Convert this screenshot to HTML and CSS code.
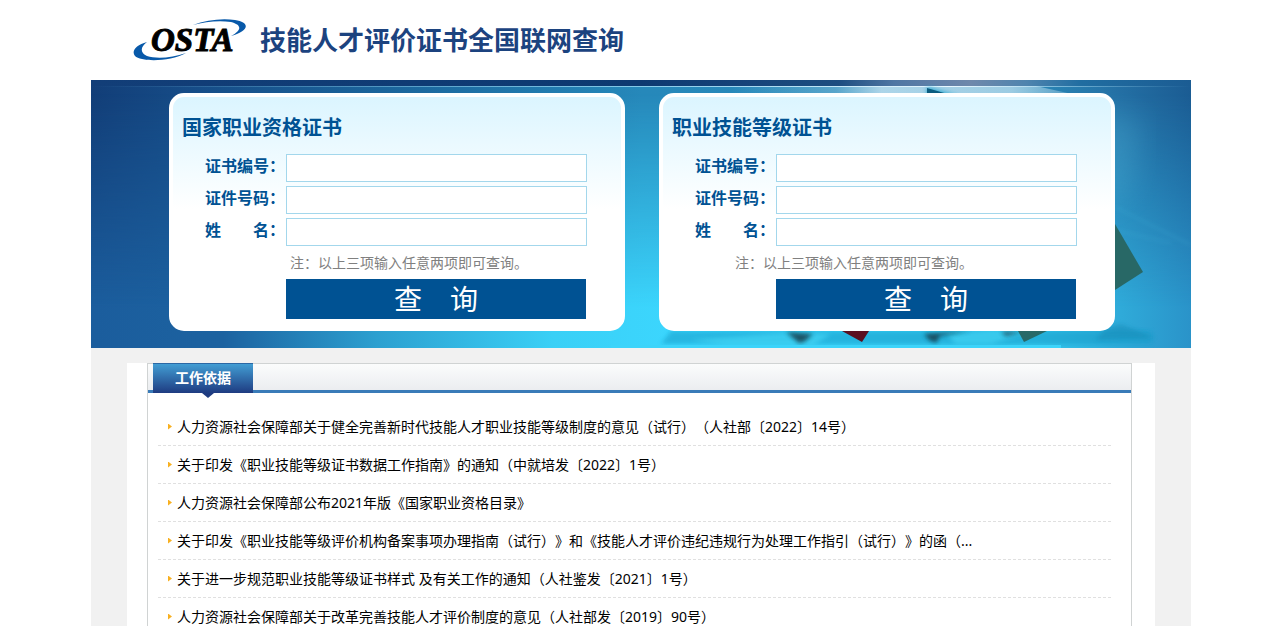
FILE: index.html
```html
<!DOCTYPE html>
<html lang="zh-CN">
<head>
<meta charset="utf-8">
<meta name="viewport" content="width=device-width, initial-scale=1">
<title>技能人才评价证书全国联网查询</title>
<link rel="stylesheet" href="styles.css">
</head>
<body>
<div class="page">
  <header class="header">
    <svg class="logo" viewBox="0 0 116 44" role="img" aria-label="OSTA">
      <path class="swoosh" d="M61 7 C74 2 90 0 103 2 C118 4 118 13 99 18 C110 12 110 7 99 4 C86 2 73 4 61 7Z"/>
      <path class="swoosh" d="M15 24 C4 27 -1 33 3 38 C9 44 38 44 54 35 C40 40 24 41 15 38 C8 35 8 29 15 24Z"/>
      <text class="logo-text" x="19" y="33">OSTA</text>
    </svg>
    <h1 class="site-title">技能人才评价证书全国联网查询</h1>
  </header>

  <section class="banner">
    <svg class="banner-art" viewBox="0 0 1100 268" preserveAspectRatio="none" aria-hidden="true">
      <defs>
        <linearGradient id="base" x1="0" y1="0" x2="1" y2="0">
          <stop offset="0" stop-color="#123e78"/><stop offset=".09" stop-color="#164c87"/>
          <stop offset=".3" stop-color="#1c699f"/><stop offset=".5" stop-color="#2688ba"/>
          <stop offset=".85" stop-color="#2a89b8"/><stop offset=".92" stop-color="#2674a8"/><stop offset="1" stop-color="#1b5c93"/>
        </linearGradient>
        <linearGradient id="low" x1="0" y1="0" x2="1" y2="0">
          <stop offset="0" stop-color="#1b5d9d"/><stop offset=".12" stop-color="#1c62a0"/>
          <stop offset=".26" stop-color="#2ca0d0"/><stop offset=".42" stop-color="#3ad0f6"/>
          <stop offset=".55" stop-color="#3cd7ff"/><stop offset=".86" stop-color="#35c6ec"/><stop offset="1" stop-color="#2a93c9"/>
        </linearGradient>
        <linearGradient id="fade" x1="0" y1="0" x2="0" y2="1">
          <stop offset=".05" stop-color="#fff" stop-opacity="0"/><stop offset=".85" stop-color="#fff"/>
        </linearGradient>
        <mask id="down"><rect width="1100" height="268" fill="url(#fade)"/></mask>
        <linearGradient id="strip" x1="0" y1="0" x2="1" y2="0">
          <stop offset="0" stop-color="#123e78"/><stop offset=".5" stop-color="#0d3971"/><stop offset=".68" stop-color="#1d4d80"/>
          <stop offset=".73" stop-color="#4f76a3"/><stop offset=".8" stop-color="#6f88ab"/><stop offset=".85" stop-color="#4f84ae"/><stop offset=".9" stop-color="#206da1"/><stop offset="1" stop-color="#1b5c93"/>
        </linearGradient>
        <linearGradient id="line" x1="0" y1="0" x2="1" y2="0">
          <stop offset="0" stop-color="#8fd0ed" stop-opacity="0"/><stop offset=".5" stop-color="#8fd0ed" stop-opacity=".9"/>
          <stop offset=".78" stop-color="#e8f7ff"/><stop offset="1" stop-color="#8fd0ed" stop-opacity="0"/>
        </linearGradient>
        <linearGradient id="glare" x1="0" y1="0" x2="1" y2="0">
          <stop offset="0" stop-color="#cde8f5" stop-opacity="0"/><stop offset=".3" stop-color="#cde8f5" stop-opacity=".3"/><stop offset=".43" stop-color="#cde8f5" stop-opacity=".8"/>
          <stop offset=".8" stop-color="#cde8f5" stop-opacity=".7"/><stop offset="1" stop-color="#cde8f5" stop-opacity=".2"/>
        </linearGradient>
        <filter id="soft" x="-30%" y="-30%" width="160%" height="160%"><feGaussianBlur stdDeviation="2"/></filter>
        <filter id="softer" x="-30%" y="-30%" width="160%" height="160%"><feGaussianBlur stdDeviation="14"/></filter>
      </defs>
      <rect width="1100" height="268" fill="url(#base)"/>
      <rect width="1100" height="268" fill="url(#low)" mask="url(#down)"/>
      <path d="M1000 30 L1050 40 L1040 110 L1000 130Z" fill="#58b5d6" opacity=".25" filter="url(#softer)"/>
      <path d="M640 6 H945 L990 16 H640Z" fill="url(#glare)"/>
      <rect width="1100" height="6" fill="url(#strip)"/>
      <rect y="6" width="1100" height="1" fill="url(#line)"/>
      <path d="M836 7 L868 16 H836Z" fill="#2aa8d0" filter="url(#soft)"/>
      <path d="M836 8 L860 15 H836Z" fill="#0b5c80"/>
      <path d="M1024 127 L1100 165 M1024 150 L1080 163" stroke="#4fbddf" stroke-width="2" opacity=".2" filter="url(#soft)"/>
      <path d="M580 251 H1060 V264 H570Z" fill="#159dc9" opacity=".55" filter="url(#soft)"/>
      <path d="M700 252 L740 254 L722 266 H636 L600 260Z M855 254 L900 250 L940 252 L900 264 H865Z" fill="#42d4f4" opacity=".7" filter="url(#soft)"/>
      <path d="M695 252 L722 254 L713 262 L708 263Z M833 254 L880 251 L849 256 L845 263 L838 260Z M910 252 H932 L915 256Z" fill="#123f50" opacity=".85" filter="url(#soft)"/>
      <path d="M1015 248 L1030 244 L1064 258 L1005 260Z" fill="#1689b5" opacity=".5" filter="url(#soft)"/>
      <path d="M751 251 H778 L771 262Z" fill="#5b1020"/>
      <path d="M927 251 H956 L933 262Z" fill="#286967"/>
      <path d="M1024 144 L1052 192 L1024 210Z" fill="#286866"/>
      <rect y="265" x="520" width="450" height="3" fill="#3cd4fa"/>
    </svg>

    <form class="card" onsubmit="return false">
      <h2 class="card-title">国家职业资格证书</h2>
      <div class="field"><label class="label" for="q-cert">证书编号：</label><input class="input" id="q-cert" type="text"></div>
      <div class="field"><label class="label" for="q-id">证件号码：</label><input class="input" id="q-id" type="text"></div>
      <div class="field"><label class="label" for="q-name">姓　　名：</label><input class="input" id="q-name" type="text"></div>
      <p class="note">注：以上三项输入任意两项即可查询。</p>
      <button class="submit" type="submit">查　询</button>
    </form>

    <form class="card" onsubmit="return false">
      <h2 class="card-title">职业技能等级证书</h2>
      <div class="field"><label class="label" for="s-cert">证书编号：</label><input class="input" id="s-cert" type="text"></div>
      <div class="field"><label class="label" for="s-id">证件号码：</label><input class="input" id="s-id" type="text"></div>
      <div class="field"><label class="label" for="s-name">姓　　名：</label><input class="input" id="s-name" type="text"></div>
      <p class="note note-wide">注：以上三项输入任意两项即可查询。</p>
      <button class="submit" type="submit">查　询</button>
    </form>
  </section>

  <main class="content">
    <div class="sheet">
      <section class="panel">
        <div class="panel-head"><h2 class="tab">工作依据</h2></div>
        <ul class="list">
          <li class="item"><a class="link" href="#">人力资源社会保障部关于健全完善新时代技能人才职业技能等级制度的意见（试行）（人社部〔2022〕14号）</a></li>
          <li class="item"><a class="link" href="#">关于印发《职业技能等级证书数据工作指南》的通知（中就培发〔2022〕1号）</a></li>
          <li class="item"><a class="link" href="#">人力资源社会保障部公布2021年版《国家职业资格目录》</a></li>
          <li class="item"><a class="link" href="#">关于印发《职业技能等级评价机构备案事项办理指南（试行）》和《技能人才评价违纪违规行为处理工作指引（试行）》的函（...</a></li>
          <li class="item"><a class="link" href="#">关于进一步规范职业技能等级证书样式 及有关工作的通知（人社鉴发〔2021〕1号）</a></li>
          <li class="item"><a class="link" href="#">人力资源社会保障部关于改革完善技能人才评价制度的意见（人社部发〔2019〕90号）</a></li>
        </ul>
      </section>
    </div>
  </main>
</div>
</body>
</html>
```
FILE: styles.css
```css
* { box-sizing: border-box; }

body {
  margin: 0;
  padding-left: 2px;
  background: #fff;
  color: #000;
  font-family: "Noto Sans", "Noto Sans CJK SC", sans-serif;
  font-size: 14px;
  text-spacing-trim: space-all;
}

h1, h2, p, ul { margin: 0; padding: 0; }

.page {
  max-width: 1100px;
  margin: 0 auto;
}

.header {
  display: flex;
  align-items: center;
  gap: 12px;
  height: 80px;
  padding-left: 41px;
}

.logo { width: 116px; height: 44px; flex: none; }
.swoosh { fill: #0859a9; }
.logo-text {
  font: italic bold 33px "Liberation Serif", serif;
  fill: #000;
  stroke: #000;
  stroke-width: 1px;
}

.site-title {
  color: #1c437f;
  font-size: 26px;
  line-height: 36px;
  font-weight: 700;
}

.banner {
  position: relative;
  display: flex;
  flex-wrap: wrap;
  justify-content: center;
  gap: 34px;
  padding: 13px 0 17px 2px;
  background: #2688ba;
}

.banner-art {
  position: absolute;
  inset: 0;
  width: 100%;
  height: 100%;
}

.card {
  position: relative;
  width: 456px;
  max-width: 100%;
  padding: 17px 34px 8px 32px;
  border: 4px solid #fff;
  border-radius: 15px;
  background: linear-gradient(#dbf5ff, #fff 112px);
}

.card-title {
  margin: 0 0 12px -23px;
  color: #005293;
  font-size: 20px;
  line-height: 28px;
  font-weight: 700;
}

.field {
  display: flex;
  align-items: flex-start;
  margin-bottom: 4px;
}

.label {
  flex: none;
  width: 81px;
  color: #005293;
  font-size: 16px;
  line-height: 24px;
  font-weight: 600;
}

.input {
  flex: 1;
  min-width: 0;
  max-width: 301px;
  height: 28px;
  padding: 0 4px;
  border: 1px solid #a3d7ec;
  border-radius: 0;
  background: #fff;
  font: inherit;
}

.note {
  padding: 2px 0 6px 85px;
  color: #808080;
  line-height: 21px;
}

.note-wide { padding-left: 40px; }

.submit {
  display: block;
  width: 300px;
  height: 40px;
  margin-left: 81px;
  padding: 0;
  border: 0;
  background: #005293;
  color: #fff;
  font-family: inherit;
  font-size: 28px;
  line-height: 40px;
}

.content {
  padding: 15px 36px 0;
  background: #f1f1f1;
}

.sheet {
  padding: 0 23px 0 20px;
  background: #fff;
}

.panel {
  border: 1px solid #d0d3d3;
  border-bottom: 0;
}

.panel-head {
  display: flex;
  align-items: flex-start;
  height: 29px;
  padding-left: 5px;
  border-bottom: 3px solid #397bb8;
  background: linear-gradient(#fbfcfc, #ebedf0);
}

.tab {
  position: relative;
  width: 100px;
  height: 30px;
  margin-top: -1px;
  border-top: 1px solid #2b68a5;
  background: linear-gradient(#429dd3, #1e3b81);
  color: #fff;
  font-size: 14px;
  line-height: 28px;
  text-align: center;
}

.tab::after {
  content: "";
  position: absolute;
  left: 55%;
  top: 100%;
  margin-left: -6px;
  border: solid transparent;
  border-width: 5px 6px 0;
  border-top-color: #1e3b81;
}

.list {
  list-style: none;
  padding: 15px 20px 0 10px;
}

.item {
  display: flex;
  align-items: center;
  gap: 5px;
  height: 38px;
  padding-left: 10px;
  border-bottom: 1px dashed #e0e0e0;
}

.item::before {
  content: "";
  width: 4px;
  height: 6px;
  background: #f8b020;
  clip-path: polygon(0 0, 100% 50%, 0 100%);
}

.link {
  color: #000;
  line-height: 24px;
  text-decoration: none;
  white-space: nowrap;
}
```
